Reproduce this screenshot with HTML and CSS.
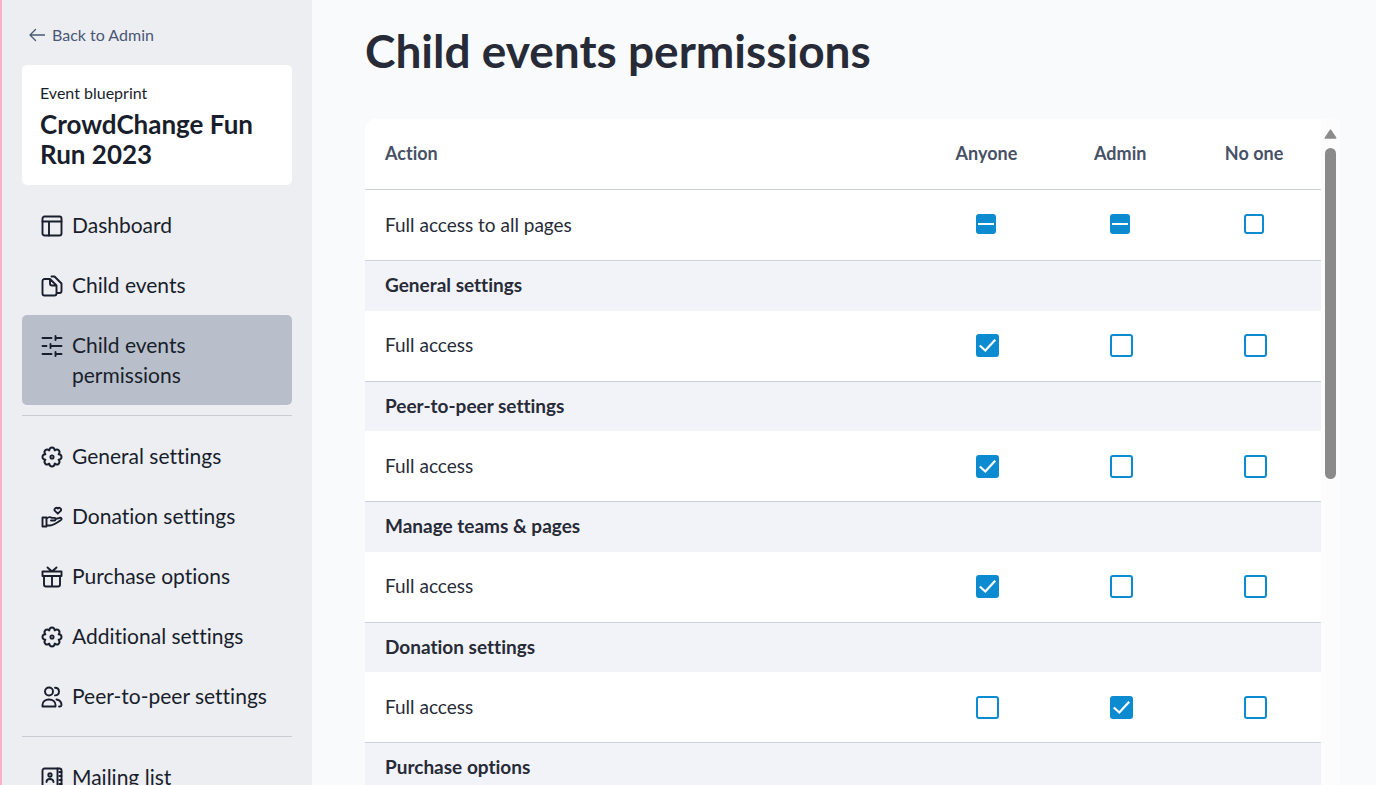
FILE: index.html
```html
<!DOCTYPE html>
<html lang="en">
  <head>
    <meta charset="utf-8">
    <title>Child events permissions</title>
    <link rel="stylesheet" href="styles.css">
  </head>
  <body>
    <svg class="sprite" aria-hidden="true">
      <symbol id="cog" viewBox="0 0 22 22">
        <path d="M8.3 4.4C8.6.5 13.4.5 13.7 4.4C16.7 1.9 20.1 5.3 17.6 8.3C21.5 8.6 21.5 13.4 17.6 13.7C20.1 16.7 16.7 20.1 13.7 17.6C13.4 21.5 8.6 21.5 8.3 17.6C5.3 20.1 1.9 16.7 4.4 13.7C.5 13.4.5 8.6 4.4 8.3C1.9 5.3 5.3 1.9 8.3 4.4z"/>
        <circle cx="11" cy="11" r="1.6"/>
      </symbol>
    </svg>

    <div class="layout">
      <aside class="sidebar">
        <a class="back" href="#">
          <svg class="backIcon" viewBox="0 0 16 14"><path d="M15.5 7H1M6.5 1.5 1 7l5.5 5.5"/></svg>
          Back to Admin
        </a>

        <div class="eventCard">
          <p class="eventType">Event blueprint</p>
          <h2 class="eventName">CrowdChange Fun Run 2023</h2>
        </div>

        <nav>
          <a class="navItem" href="#">
            <svg class="icon" viewBox="0 0 22 22"><rect x="1.5" y="1.5" width="19" height="19" rx="2"/><path d="M1.5 6.5h19M8 6.5v14"/></svg>
            Dashboard
          </a>
          <a class="navItem" href="#">
            <svg class="icon" viewBox="0 0 22 22"><path d="M9 4H3.500a2 2 0 0 0-2 2v12.500a2 2 0 0 0 2 2h10a2 2 0 0 0 2-2V10.500zM9 4v4.500a2 2 0 0 0 2 2h4.500M10.500 1.500h3l7 7V16a2 2 0 0 1-2 2h-3"/></svg>
            Child events
          </a>
          <a class="navItem active" href="#">
            <svg class="icon" viewBox="0 0 22 22"><path d="M1.5 3h9M14.5 3h6M14.5 1v4M1.5 11h4M9.500 11h11M9.500 9v4M1.500 19h9M14.500 19h6M14.500 17v4"/></svg>
            Child events permissions
          </a>
          <hr class="line">
          <a class="navItem" href="#">
            <svg class="icon"><use href="#cog"/></svg>
            General settings
          </a>
          <a class="navItem" href="#">
            <svg class="icon" viewBox="0 0 22 22"><path d="M16.800 7.700 13.700 4.600a1.900 1.900 0 0 1 3.100-2.100 1.900 1.900 0 0 1 3.100 2.100zM1.500 11.500h4v9h-4zM5.500 12.500c2-1.600 4-1.700 5.500-.6h2.300c1.700 0 1.700 2.600 0 2.600H10M14.500 13l4.200-1.200c1.800-.4 2.600 1.500 1 2.500-4 2.800-7.700 5.200-10.700 5.200H5.500"/></svg>
            Donation settings
          </a>
          <a class="navItem" href="#">
            <svg class="icon" viewBox="0 0 22 22"><path d="M1.5 5.500h19v4.500h-19zM3 10v8.500a2 2 0 0 0 2 2h12a2 2 0 0 0 2-2V10M11 10v10.500M6.500 1.500 11 5.500l4.500-4"/></svg>
            Purchase options
          </a>
          <a class="navItem" href="#">
            <svg class="icon"><use href="#cog"/></svg>
            Additional settings
          </a>
          <a class="navItem" href="#">
            <svg class="icon" viewBox="0 0 22 22"><circle cx="8" cy="5.500" r="4"/><path d="M1.500 20.500v-1.500c0-3.300 2.700-5.500 6.500-5.500s6.500 2.200 6.500 5.500v1.500zM14 1.700c5.300 0 5.300 7.700 0 7.700M15.500 13.500c3 .6 5 2.600 5 5.500 0 .9-.6 1.500-1.500 1.500h-1"/></svg>
            Peer-to-peer settings
          </a>
          <hr class="line">
          <a class="navItem" href="#">
            <svg class="icon" viewBox="0 0 22 22"><rect x="1.5" y="1.5" width="19" height="19" rx="2"/><path d="M16.500 1.500v19M18.500 5h2M18.500 9h2M18.500 13h2M18.500 17h2M5.500 15c0-4 7-4 7 0"/><circle cx="9" cy="8" r="1.700"/></svg>
            Mailing list
          </a>
        </nav>
      </aside>

      <main class="content">
        <h1>Child events permissions</h1>
        <div class="tableHolder">
          <div class="tableArea">
            <table class="permissions">
              <thead>
                <tr>
                  <th class="action" scope="col">Action</th>
                  <th scope="col">Anyone</th>
                  <th scope="col">Admin</th>
                  <th scope="col">No one</th>
                </tr>
              </thead>
              <tbody>
                <tr class="allPages">
                  <td class="action">Full access to all pages</td>
                  <td><input type="checkbox" class="partial" aria-label="All pages, anyone"></td>
                  <td><input type="checkbox" class="partial" aria-label="All pages, admin"></td>
                  <td><input type="checkbox" aria-label="All pages, no one"></td>
                </tr>
                <tr class="section"><th colspan="4" scope="colgroup">General settings</th></tr>
                <tr>
                  <td class="action">Full access</td>
                  <td><input type="checkbox" aria-label="General settings, anyone" checked></td>
                  <td><input type="checkbox" aria-label="General settings, admin"></td>
                  <td><input type="checkbox" aria-label="General settings, no one"></td>
                </tr>
                <tr class="section"><th colspan="4" scope="colgroup">Peer-to-peer settings</th></tr>
                <tr>
                  <td class="action">Full access</td>
                  <td><input type="checkbox" aria-label="Peer-to-peer settings, anyone" checked></td>
                  <td><input type="checkbox" aria-label="Peer-to-peer settings, admin"></td>
                  <td><input type="checkbox" aria-label="Peer-to-peer settings, no one"></td>
                </tr>
                <tr class="section"><th colspan="4" scope="colgroup">Manage teams &amp; pages</th></tr>
                <tr>
                  <td class="action">Full access</td>
                  <td><input type="checkbox" aria-label="Manage teams and pages, anyone" checked></td>
                  <td><input type="checkbox" aria-label="Manage teams and pages, admin"></td>
                  <td><input type="checkbox" aria-label="Manage teams and pages, no one"></td>
                </tr>
                <tr class="section"><th colspan="4" scope="colgroup">Donation settings</th></tr>
                <tr>
                  <td class="action">Full access</td>
                  <td><input type="checkbox" aria-label="Donation settings, anyone"></td>
                  <td><input type="checkbox" aria-label="Donation settings, admin" checked></td>
                  <td><input type="checkbox" aria-label="Donation settings, no one"></td>
                </tr>
                <tr class="section"><th colspan="4" scope="colgroup">Purchase options</th></tr>
              </tbody>
            </table>
          </div>
          <div class="scrollTrack">
            <svg class="scrollArrow" viewBox="0 0 13 10"><path d="M6.500 1.200 11.700 9H1.300z"/></svg>
            <div class="scrollThumb"></div>
          </div>
        </div>
      </main>
    </div>
  </body>
</html>
```
FILE: styles.css
```css
*{
  box-sizing: border-box;
}

body{
  margin: 0;
  background: #f9fafc;
  color: #272b37;
  font-family: Lato, "Liberation Sans", sans-serif;
  font-size: 19px;
  font-variant-ligatures: none;
}

.sprite{
  display: none;
}

.layout{
  display: flex;
  height: 100vh;
  overflow: hidden;
}

/* sidebar */
.sidebar{
  flex: 0 0 312px;
  padding: 20px;
  border-left: 2px solid #f9b0c9;
  background: #edeef2;
  color: #191e2c;
  overflow: hidden;
}

.back{
  display: flex;
  align-items: center;
  gap: 7px;
  padding-left: 7px;
  margin-bottom: 15px;
  color: #4a5775;
  font-size: 16px;
  line-height: 30px;
  text-decoration: none;
}

.backIcon{
  width: 16px;
  height: 14px;
  fill: none;
  stroke: currentColor;
  stroke-width: 1.3;
  stroke-linecap: round;
  stroke-linejoin: round;
}

.eventCard{
  margin-bottom: 10px;
  padding: 16px 18px;
  border-radius: 5px;
  background: #fff;
}

.eventType{
  margin: 0;
  padding-bottom: 4px;
  font-size: 16px;
  line-height: 24px;
}

.eventName{
  margin: 0;
  font-size: 26px;
  font-weight: 700;
  line-height: 30px;
}

.navItem{
  display: flex;
  gap: 9px;
  padding: 15px 19px;
  border-radius: 5px;
  color: #191e2c;
  font-size: 21px;
  line-height: 30px;
  text-decoration: none;
}

.navItem.active{
  background: #b8beca;
}

.icon{
  flex: none;
  width: 22px;
  height: 22px;
  margin-top: 5px;
  fill: none;
  stroke: currentColor;
  stroke-width: 1.9;
  stroke-linecap: round;
  stroke-linejoin: round;
}

.line{
  margin: 10px 0;
  border: 0;
  border-top: 1px solid #c8ccd4;
}

/* permissions table */
.content{
  display: flex;
  flex: 1;
  flex-direction: column;
  min-width: 0;
  padding: 20px 36px 0 53px;
}

h1{
  margin: 0 0 37px;
  font-size: 46px;
  font-weight: 700;
  line-height: 62px;
}

.tableHolder{
  display: flex;
  flex: 1;
  min-height: 0;
  border-radius: 10px 0 0 0;
  background: #fcfcfc;
  overflow: hidden;
}

.tableArea{
  flex: 1;
  overflow: hidden;
}

.permissions{
  width: 100%;
  table-layout: fixed;
  border-collapse: separate;
  border-spacing: 0;
  background: #fff;
}

.permissions th, .permissions td{
  width: 14%;
  height: 71px;
  padding: 0 0 0 3px;
  border-bottom: 1px solid #cdd1da;
  text-align: center;
}

.permissions th{
  padding: 0 0 2px;
  color: #475166;
  font-size: 18px;
  font-weight: 700;
}

.permissions .action{
  width: 58%;
  padding: 0 0 2px 20px;
  text-align: left;
}

.permissions .section th{
  height: auto;
  padding: 10px 20px 11px;
  border-bottom: 0;
  background: #f2f3f8;
  color: #272b37;
  font-size: 19px;
  line-height: 1.5;
  text-align: left;
}

input[type="checkbox"]{
  display: block;
  width: 23px;
  height: 23px;
  margin: 0 auto;
  border: 2px solid #0d8bd0;
  border-radius: 3px;
  appearance: none;
}

input[type="checkbox"]:checked{
  background: #0d8bd0 url("data:image/svg+xml,%3Csvg xmlns='http://www.w3.org/2000/svg' viewBox='0 0 19 19'%3E%3Cpath d='M1.800 9.500 7.300 14.500 17.200 3.800' fill='none' stroke='white' stroke-width='2.200'/%3E%3C/svg%3E") center / 19px 19px no-repeat;
}

.permissions .allPages td:not(.action){
  padding: 0 0 2px;
}

.allPages input[type="checkbox"]{
  width: 20px;
  height: 20px;
}

input[type="checkbox"].partial{
  background: linear-gradient(#fff, #fff) center / 16px 2px no-repeat #0d8bd0;
}

.scrollTrack{
  display: flex;
  flex: 0 0 19px;
  flex-direction: column;
  align-items: center;
  gap: 9px;
  padding-top: 10px;
}

.scrollArrow{
  width: 13px;
  height: 10px;
  fill: #8b8b8b;
  stroke: #8b8b8b;
  stroke-width: 1.5;
  stroke-linejoin: round;
}

.scrollThumb{
  width: 11px;
  height: 50.5%;
  border-radius: 6px;
  background: #8b8b8b;
}
```
